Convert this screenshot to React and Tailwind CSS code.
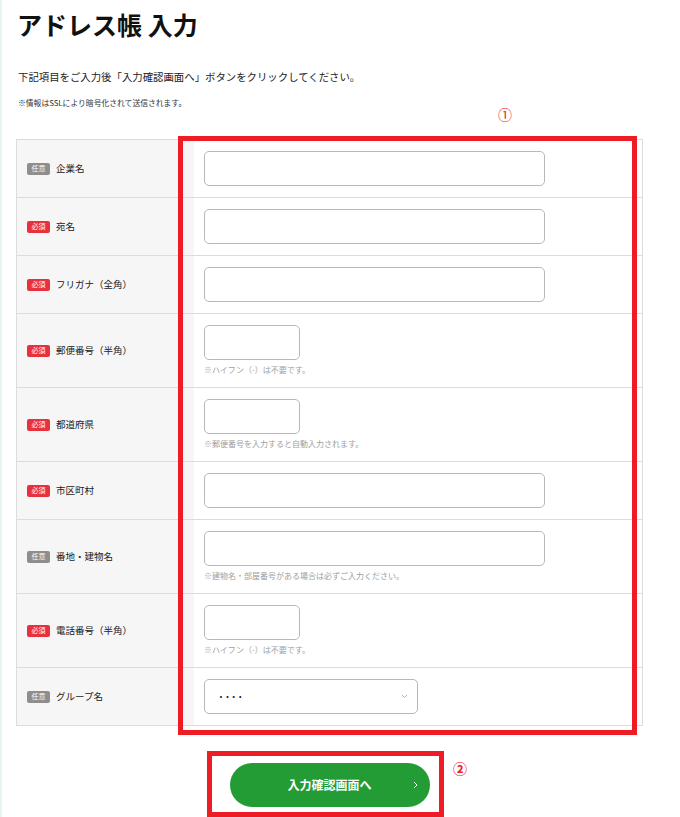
const font = { fontFamily: '"Noto Sans CJK JP", "Noto Sans", sans-serif' };

const rows = [
  { label: "企業名", required: false, size: "long" },
  { label: "宛名", required: true, size: "long" },
  { label: "フリガナ（全角）", required: true, size: "long" },
  { label: "郵便番号（半角）", required: true, size: "short", hint: "※ハイフン（-）は不要です。" },
  { label: "都道府県", required: true, size: "short", hint: "※郵便番号を入力すると自動入力されます。" },
  { label: "市区町村", required: true, size: "long" },
  { label: "番地・建物名", required: false, size: "long", hint: "※建物名・部屋番号がある場合は必ずご入力ください。" },
  { label: "電話番号（半角）", required: true, size: "short", hint: "※ハイフン（-）は不要です。" },
  { label: "グループ名", required: false, size: "select" },
];

function Badge({ required }) {
  return (
    <span
      className={`inline-flex items-center justify-center w-[23px] h-[12px] rounded-[2px] text-[7px] leading-none text-white ${
        required ? "bg-[#e8313d]" : "bg-[#8e8e8e]"
      }`}
    >
      {required ? "必須" : "任意"}
    </span>
  );
}

function Field({ row }) {
  if (row.size === "select") {
    return (
      <div className="w-[214px] h-[35px] border border-[#b8b8b8] rounded-[5px] bg-white flex items-center justify-between pl-[13px] pr-[9px]">
        <span className="text-[10px] tracking-[0.5px] font-bold text-[#111] leading-none">····</span>
        <svg width="7" height="5" viewBox="0 0 7 5" fill="none">
          <path d="M1 1l2.5 2.5L6 1" stroke="#aaa" strokeWidth="0.9" />
        </svg>
      </div>
    );
  }
  return (
    <div>
      <div
        className={`h-[35px] border border-[#b8b8b8] rounded-[5px] bg-white ${
          row.size === "short" ? "w-[96px]" : "w-[341px]"
        }`}
      />
      {row.hint && (
        <p className="mt-[4px] text-[8px] leading-[12px] text-[#a0a0a0]">{row.hint}</p>
      )}
    </div>
  );
}

export default function App() {
  return (
    <div className="relative flex min-h-[817px] bg-white text-[#222]" style={font}>
      <div className="w-[2px] bg-[#e8f5ea] shrink-0" />
      <div className="pl-[14px] w-[641px]">
        <h1 className="pt-[7px] ml-[1px] text-[25px] leading-[35px] font-bold text-[#111]">アドレス帳 入力</h1>
        <p className="mt-[27px] ml-[2px] text-[10.4px] leading-[16px] text-[#222]">
          下記項目をご入力後「入力確認画面へ」ボタンをクリックしてください。
        </p>
        <p className="mt-[12px] ml-[2px] text-[7.8px] leading-[12px] text-[#333]">
          ※情報はSSLにより暗号化されて送信されます。
        </p>

        <div className="mt-[30px] border-t border-l border-r border-[#dcdcdc]">
          {rows.map((row) => (
            <div key={row.label} className="flex border-b border-[#dcdcdc]">
              <div className="w-[177px] shrink-0 bg-[#f6f6f6] flex items-center gap-[6px] pl-[10px]">
                <Badge required={row.required} />
                <span className="text-[9.5px] text-[#222]">{row.label}</span>
              </div>
              <div className="flex-1 pl-[10px] py-[11px]">
                <Field row={row} />
              </div>
            </div>
          ))}
        </div>

        <div className="mt-[37px] flex justify-center">
          <button className="relative w-[200px] h-[44px] rounded-full bg-[#249c36] text-white text-[12px] font-bold flex items-center justify-center">
            入力確認画面へ
            <svg className="absolute right-[12px] top-1/2 -translate-y-1/2" width="5" height="8" viewBox="0 0 5 8" fill="none">
              <path d="M1 1l3 3-3 3" stroke="#fff" strokeWidth="1" />
            </svg>
          </button>
        </div>
      </div>

      {/* annotation overlays */}
      <span className="absolute left-[498px] top-[105px] text-[14px] leading-[18px] text-[#ee1c25]">①</span>
      <div className="absolute left-[178px] top-[136px] w-[459px] h-[599px] border-[5px] border-[#ee1c25]" />
      <div className="absolute left-[207px] top-[751px] w-[237px] h-[66px] border-[5px] border-[#ee1c25]" />
      <span className="absolute left-[453px] top-[759px] text-[14px] leading-[18px] font-bold text-[#ee1c25]">②</span>
    </div>
  );
}
